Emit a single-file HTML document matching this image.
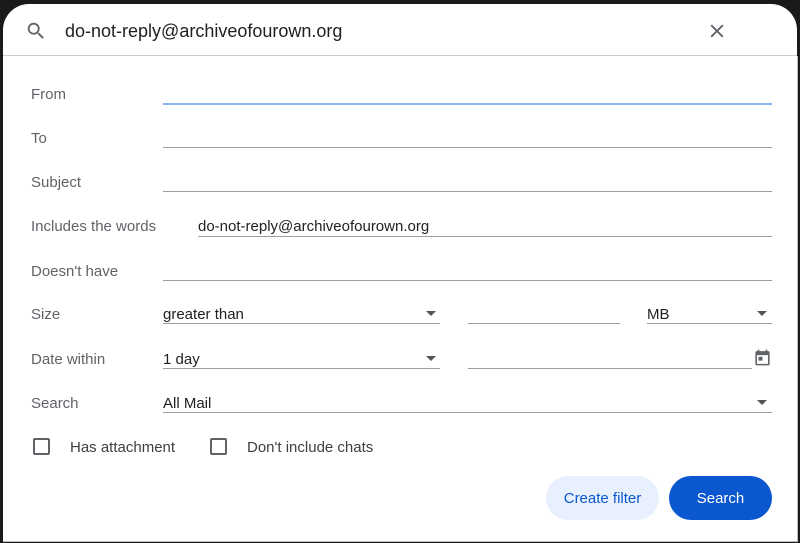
<!DOCTYPE html>
<html><head><style>
*{box-sizing:border-box;margin:0;padding:0}
body{width:800px;height:543px;background:#1a1a1a;font-family:"Liberation Sans",Arial,sans-serif;position:relative;overflow:hidden}
.bar{position:absolute;left:3px;top:4px;width:794px;height:52px;background:#fff;border-radius:26px 26px 0 0;border-bottom:1px solid #ccc}
.bar .q{position:absolute;left:62px;top:17px;font-size:18px;color:#202124}
.panel{position:absolute;left:3px;top:56px;width:795px;height:486px;background:#fff;border-right:1px solid #bbb;border-bottom:1px solid #bbb}
.l{position:absolute;left:31px;font-size:15px;color:#5f6368;margin-top:1px}
.ln{position:absolute;height:1px;background:#9e9e9e}
.t{position:absolute;font-size:15px;color:#202124;margin-top:1px}
.arr{position:absolute;width:0;height:0;border-left:5px solid transparent;border-right:5px solid transparent;border-top:5px solid #555}
.cb{position:absolute;top:438px;width:17px;height:17px;border:2px solid #5f6368;border-radius:2px}
.btn{position:absolute;top:476px;height:44px;border-radius:22px;font-size:15px;text-align:center;line-height:45px}
</style></head><body>
<div class="panel"></div>
<div class="bar">
<svg style="position:absolute;left:22px;top:16px" width="22" height="22" viewBox="0 0 24 24"><path d="M15.5 14h-.79l-.28-.27A6.47 6.47 0 0 0 16 9.5 6.5 6.5 0 1 0 9.5 16c1.61 0 3.09-.59 4.23-1.57l.27.28v.79l5 4.99L20.49 19l-4.99-5zm-6 0C7.01 14 5 11.99 5 9.5S7.01 5 9.5 5 14 7.01 14 9.5 11.99 14 9.5 14z" fill="#5f6368"/></svg>
<div class="q">do-not-reply@archiveofourown.org</div>
<svg style="position:absolute;left:704px;top:17px" width="20" height="20" viewBox="0 0 24 24"><path d="M5 5L19 19M19 5L5 19" stroke="#5f6368" stroke-width="2.2"/></svg>
</div>
<div class="l" style="top:85px">From</div><div class="ln" style="left:163px;width:609px;top:103px;background:#8ab4f8;height:2px"></div>
<div class="l" style="top:129px">To</div><div class="ln" style="left:163px;width:609px;top:147px"></div>
<div class="l" style="top:173px">Subject</div><div class="ln" style="left:163px;width:609px;top:191px"></div>
<div class="l" style="top:217px">Includes the words</div><div class="t" style="left:198px;top:217px">do-not-reply@archiveofourown.org</div><div class="ln" style="left:198px;width:574px;top:236px"></div>
<div class="l" style="top:262px">Doesn't have</div><div class="ln" style="left:163px;width:609px;top:280px"></div>
<div class="l" style="top:305px">Size</div><div class="t" style="left:163px;top:305px">greater than</div><div class="arr" style="left:426px;top:311px"></div><div class="ln" style="left:163px;width:277px;top:323px"></div>
<div class="ln" style="left:468px;width:152px;top:323px"></div>
<div class="t" style="left:647px;top:305px">MB</div><div class="arr" style="left:757px;top:311px"></div><div class="ln" style="left:647px;width:125px;top:323px"></div>
<div class="l" style="top:350px">Date within</div><div class="t" style="left:163px;top:350px">1 day</div><div class="arr" style="left:426px;top:356px"></div><div class="ln" style="left:163px;width:277px;top:368px"></div>
<div class="ln" style="left:468px;width:284px;top:368px"></div>
<svg style="position:absolute;left:753px;top:348px" width="19" height="19" viewBox="0 0 24 24"><path d="M19 4h-1V2h-2v2H8V2H6v2H5a2 2 0 0 0-2 2v14a2 2 0 0 0 2 2h14a2 2 0 0 0 2-2V6a2 2 0 0 0-2-2zm0 16H5V9h14v11zM7 11h5v5H7z" fill="#5f6368"/></svg>
<div class="l" style="top:394px">Search</div><div class="t" style="left:163px;top:394px">All Mail</div><div class="arr" style="left:757px;top:400px"></div><div class="ln" style="left:163px;width:609px;top:412px"></div>
<div class="cb" style="left:33px"></div><div class="t" style="left:70px;top:438px;color:#3c4043">Has attachment</div>
<div class="cb" style="left:210px"></div><div class="t" style="left:247px;top:438px;color:#3c4043">Don't include chats</div>
<div class="btn" style="left:546px;width:113px;background:#e8f0fe;color:#0b57d0">Create filter</div>
<div class="btn" style="left:669px;width:103px;background:#0b57d0;color:#fff">Search</div>
</body></html>
